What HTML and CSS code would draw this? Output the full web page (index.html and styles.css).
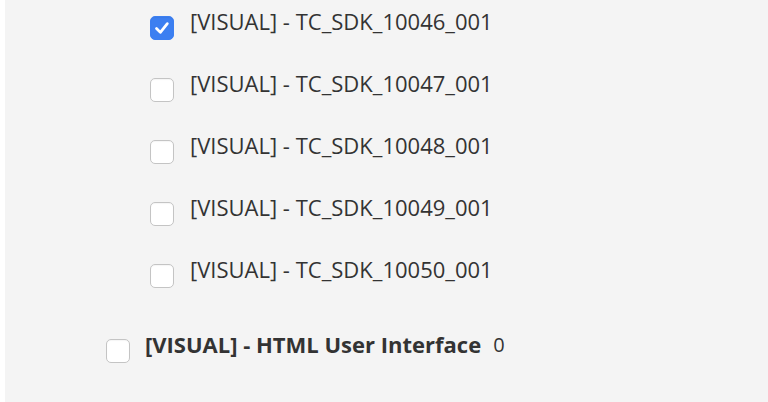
FILE: index.html
```html
<!DOCTYPE html>
<html>
<head>
<meta charset="utf-8">
<link rel="stylesheet" href="styles.css">
</head>
<body>
<div class="panel">
  <ul class="sublist">
    <li class="item"><span class="box checked"><svg viewBox="0 0 24 24" width="24" height="24"><path d="M6 12.5 L10.2 16.8 L17.8 7.2" fill="none" stroke="#fff" stroke-width="3" stroke-linecap="round" stroke-linejoin="round"/></svg></span><span class="label">[VISUAL] - TC_SDK_10046_001</span></li>
    <li class="item"><span class="box"></span><span class="label">[VISUAL] - TC_SDK_10047_001</span></li>
    <li class="item"><span class="box"></span><span class="label">[VISUAL] - TC_SDK_10048_001</span></li>
    <li class="item"><span class="box"></span><span class="label">[VISUAL] - TC_SDK_10049_001</span></li>
    <li class="item"><span class="box"></span><span class="label">[VISUAL] - TC_SDK_10050_001</span></li>
  </ul>
  <div class="group">
    <span class="box"></span><span class="group-label">[VISUAL] - HTML User Interface</span><span class="count">0</span>
  </div>
</div>
</body>
</html>
```
FILE: styles.css
```css
html, body {
  margin: 0;
  padding: 0;
  background: #ffffff;
}
body {
  font-family: "Open Sans", "Noto Sans", sans-serif;
  color: #333333;
}
.panel {
  margin-left: 5px;
  height: 402px;
  background: #f4f4f4;
  padding-top: 8px;
  box-sizing: border-box;
}
.sublist {
  list-style: none;
  margin: 0;
  padding: 0 0 0 145px;
}
.item {
  display: flex;
  align-items: flex-start;
  gap: 16px;
  height: 62px;
}
.box {
  flex: none;
  width: 24px;
  height: 24px;
  margin-top: 8px;
  box-sizing: border-box;
  border: 1px solid #c4c4c4;
  border-radius: 5px;
  background: #ffffff;
  box-shadow: inset 0 1px 1px rgba(0,0,0,0.04);
}
.box.checked {
  background: #3c7ff1;
  border-color: #3c7ff1;
  display: flex;
  align-items: center;
  justify-content: center;
}
.box.checked svg {
  display: block;
}
.label {
  font-size: 22px;
  line-height: 26px;
}
.group {
  display: flex;
  align-items: flex-start;
  margin-top: 13px;
  padding-left: 101px;
}
.group .box {
  margin-top: 8px;
  margin-right: 15px;
}
.group-label {
  font-size: 22px;
  line-height: 26px;
  font-weight: 700;
}
.count {
  font-size: 20px;
  line-height: 26px;
  margin-left: 12px;
  margin-top: 1px;
}
```
